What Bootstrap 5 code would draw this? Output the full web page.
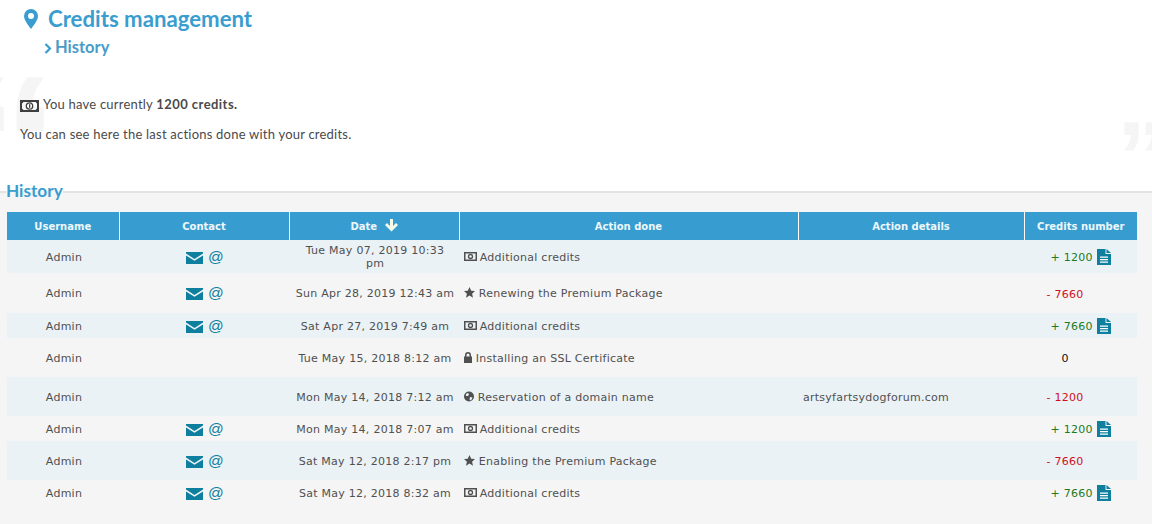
<!DOCTYPE html>
<html lang="en">
<head>
<meta charset="utf-8">
<title>Credits management</title>
<link href="https://cdn.jsdelivr.net/npm/bootstrap@5.3.0/dist/css/bootstrap.min.css" rel="stylesheet">
<style>
html,body{height:100%}
body{background:#fff;font-family:"DejaVu Sans",sans-serif;font-size:11px;color:#505050;overflow:hidden;display:flex;flex-direction:column}
.title-row{padding:3px 0 0 24px;height:35px;gap:10px}
.title-txt{font-size:22.2px;line-height:28px;margin:0;font-family:Lato,sans-serif;font-weight:700;color:#3a9dcf}
.sub-row{padding-left:44px;height:26px;gap:3px}
.sub-txt{font-size:16.5px;line-height:24px;margin:0 0 2px;font-family:Lato,sans-serif;font-weight:700;color:#4a9cc8}
.intro{position:relative;height:120px;padding:34px 0 0 20px;font-family:Lato,sans-serif;font-size:13px;letter-spacing:.22px;color:#4a4a4a}
.intro p{margin:0 0 12px;line-height:18px}
.intro b{letter-spacing:.45px}
.q-mark{position:absolute;font-family:"Liberation Sans",sans-serif;font-weight:700;color:#f5f5f5;line-height:1;letter-spacing:0;z-index:-1}
.q-open{font-size:190px;left:-37px;top:-14px}
.q-close{font-size:100px;right:-15px;top:45px}
.hist{flex:1 1 auto;margin:0;border:0;border-top:2px solid #e3e3e3;background:#f5f5f5;padding:0 15px 0 7px;min-width:0}
.hist legend{float:none;width:auto;margin:0 0 0 -1px;padding:0 0 2px;font-family:Lato,sans-serif;font-weight:700;font-size:17.2px;line-height:20px;color:#3a9dcf}
.log{table-layout:fixed;width:1130px;margin:9px 0 0;--bs-table-bg:transparent;--bs-table-striped-bg:#eaf2f6;--bs-table-striped-color:#505050;--bs-table-color:#505050;color:#505050}
.log th{background:#379dd0;color:#eef7fb;font-size:10px;font-weight:700;height:28px;padding:1px 4px 0;border:0;border-right:1px solid #fff;vertical-align:middle;text-align:center;box-shadow:none}
.log th:last-child{border-right:0}
.log td{border:0;padding:1px 3px 0 5px;vertical-align:middle;line-height:13px;letter-spacing:.26px}
.log tbody tr:nth-child(1) td{height:33px}
.log tbody tr:nth-child(2) td{height:40px}
.log tbody tr:nth-child(3) td{height:25px}
.log tbody tr:nth-child(4) td{height:39px}
.log tbody tr:nth-child(5) td{height:39px}
.log tbody tr:nth-child(6) td{height:25px}
.log tbody tr:nth-child(7) td{height:39px}
.log tbody tr:nth-child(8) td{height:25px}
.at{font-family:"Liberation Sans",sans-serif;font-size:15.5px;line-height:14px;color:#0f7f9f;letter-spacing:0;display:inline-block}
.ic-mail{width:17px;height:12px;vertical-align:-2px;margin-right:1px}
.ic-file{width:14px;height:16px;vertical-align:-4px;margin-right:2px}
.ic-spacer{margin-left:15px;margin-right:0}
.ic-act{height:11px;vertical-align:-1px}
.ic-money{margin-right:-1px}
.pos{color:#1d7a1d}
.neg{color:#d0111b}
.zero{color:#111}
</style>
</head>
<body>
<div class="d-flex align-items-center title-row">
  <svg width="14" height="20" viewBox="0 0 14 20" aria-hidden="true"><path fill="#3a9dcf" fill-rule="evenodd" d="M7 0a7 7 0 0 1 7 7c0 4-4 9-7 13C4 16 0 11 0 7a7 7 0 0 1 7-7zm0 4a3 3 0 1 0 0 6 3 3 0 0 0 0-6z"/></svg>
  <h1 class="title-txt">Credits management</h1>
</div>
<div class="d-flex align-items-center sub-row">
  <svg width="8" height="11" viewBox="0 0 8 11" aria-hidden="true"><path fill="none" stroke="#3a9dcf" stroke-width="2.2" d="M1.500 1l4.500 4.500L1.500 10"/></svg>
  <h2 class="sub-txt">History</h2>
</div>
<div class="intro">
  <span class="q-mark q-open">“</span>
  <span class="q-mark q-close">”</span>
  <p><svg width="19" height="12" viewBox="0 0 19 12" class="me-1 align-text-bottom" aria-hidden="true"><path fill="#3f3f3f" fill-rule="evenodd" d="M0 0h19v12H0zM3.500 2L2 3.500v5L3.500 10h12L17 8.500v-5L15.500 2z"/><circle cx="9.500" cy="6" r="3.200" fill="#fff" stroke="#3f3f3f" stroke-width="1.300"/><rect x="9" y="4.200" width="1.300" height="3.600" fill="#3f3f3f"/></svg>You have currently <b class="fw-bold">1200 credits.</b></p>
  <p>You can see here the last actions done with your credits.</p>
</div>
<fieldset class="hist">
  <legend>History</legend>
  <table class="table table-striped log">
    <colgroup><col style="width:112px"><col style="width:170px"><col style="width:170px"><col style="width:339px"><col style="width:226px"><col style="width:113px"></colgroup>
    <thead>
      <tr>
        <th>Username</th><th>Contact</th>
        <th>Date <svg width="13" height="13" viewBox="0 0 13 13" class="align-text-bottom ms-1" aria-hidden="true"><path fill="#f4f9e8" d="M5 0h3v7l3-3 2 2-6.500 6.500L0 6l2-2 3 3z"/></svg></th>
        <th>Action done</th><th>Action details</th><th>Credits number</th>
      </tr>
    </thead>
    <tbody>
      <tr>
        <td class="text-center">Admin</td>
        <td class="text-center"><svg class="ic-mail" viewBox="0 0 17 12" aria-hidden="true"><use href="#m"/></svg> <span class="at">@</span></td>
        <td class="text-center">Tue May 07, 2019 10:33<br>pm</td>
        <td><svg class="ic-act ic-money" width="13" viewBox="0 0 13 11" aria-hidden="true"><use href="#c"/></svg> Additional credits</td>
        <td></td>
        <td class="text-center"><span class="pos">+ 1200</span> <svg class="ic-file" viewBox="0 0 14 16" aria-hidden="true"><use href="#f"/></svg></td>
      </tr>
      <tr>
        <td class="text-center">Admin</td>
        <td class="text-center"><svg class="ic-mail" viewBox="0 0 17 12" aria-hidden="true"><use href="#m"/></svg> <span class="at">@</span></td>
        <td class="text-center">Sun Apr 28, 2019 12:43 am</td>
        <td><svg class="ic-act" width="11" viewBox="0 0 11 11" aria-hidden="true"><use href="#s"/></svg> Renewing the Premium Package</td>
        <td></td>
        <td class="text-center"><span class="neg">- 7660</span> <svg class="ic-file ic-spacer invisible" viewBox="0 0 14 16" aria-hidden="true"><use href="#f"/></svg></td>
      </tr>
      <tr>
        <td class="text-center">Admin</td>
        <td class="text-center"><svg class="ic-mail" viewBox="0 0 17 12" aria-hidden="true"><use href="#m"/></svg> <span class="at">@</span></td>
        <td class="text-center">Sat Apr 27, 2019 7:49 am</td>
        <td><svg class="ic-act ic-money" width="13" viewBox="0 0 13 11" aria-hidden="true"><use href="#c"/></svg> Additional credits</td>
        <td></td>
        <td class="text-center"><span class="pos">+ 7660</span> <svg class="ic-file" viewBox="0 0 14 16" aria-hidden="true"><use href="#f"/></svg></td>
      </tr>
      <tr>
        <td class="text-center">Admin</td>
        <td></td>
        <td class="text-center">Tue May 15, 2018 8:12 am</td>
        <td><svg class="ic-act" width="8" viewBox="0 0 8 11" aria-hidden="true"><use href="#l"/></svg> Installing an SSL Certificate</td>
        <td></td>
        <td class="text-center"><span class="zero">0</span> <svg class="ic-file ic-spacer invisible" viewBox="0 0 14 16" aria-hidden="true"><use href="#f"/></svg></td>
      </tr>
      <tr>
        <td class="text-center">Admin</td>
        <td></td>
        <td class="text-center">Mon May 14, 2018 7:12 am</td>
        <td><svg class="ic-act" width="10" viewBox="0 0 10 11" aria-hidden="true"><use href="#g"/></svg> Reservation of a domain name</td>
        <td>artsyfartsydogforum.com</td>
        <td class="text-center"><span class="neg">- 1200</span> <svg class="ic-file ic-spacer invisible" viewBox="0 0 14 16" aria-hidden="true"><use href="#f"/></svg></td>
      </tr>
      <tr>
        <td class="text-center">Admin</td>
        <td class="text-center"><svg class="ic-mail" viewBox="0 0 17 12" aria-hidden="true"><use href="#m"/></svg> <span class="at">@</span></td>
        <td class="text-center">Mon May 14, 2018 7:07 am</td>
        <td><svg class="ic-act ic-money" width="13" viewBox="0 0 13 11" aria-hidden="true"><use href="#c"/></svg> Additional credits</td>
        <td></td>
        <td class="text-center"><span class="pos">+ 1200</span> <svg class="ic-file" viewBox="0 0 14 16" aria-hidden="true"><use href="#f"/></svg></td>
      </tr>
      <tr>
        <td class="text-center">Admin</td>
        <td class="text-center"><svg class="ic-mail" viewBox="0 0 17 12" aria-hidden="true"><use href="#m"/></svg> <span class="at">@</span></td>
        <td class="text-center">Sat May 12, 2018 2:17 pm</td>
        <td><svg class="ic-act" width="11" viewBox="0 0 11 11" aria-hidden="true"><use href="#s"/></svg> Enabling the Premium Package</td>
        <td></td>
        <td class="text-center"><span class="neg">- 7660</span> <svg class="ic-file ic-spacer invisible" viewBox="0 0 14 16" aria-hidden="true"><use href="#f"/></svg></td>
      </tr>
      <tr>
        <td class="text-center">Admin</td>
        <td class="text-center"><svg class="ic-mail" viewBox="0 0 17 12" aria-hidden="true"><use href="#m"/></svg> <span class="at">@</span></td>
        <td class="text-center">Sat May 12, 2018 8:32 am</td>
        <td><svg class="ic-act ic-money" width="13" viewBox="0 0 13 11" aria-hidden="true"><use href="#c"/></svg> Additional credits</td>
        <td></td>
        <td class="text-center"><span class="pos">+ 7660</span> <svg class="ic-file" viewBox="0 0 14 16" aria-hidden="true"><use href="#f"/></svg></td>
      </tr>
    </tbody>
  </table>
</fieldset>
<svg width="0" height="0" class="d-none" aria-hidden="true">
  <symbol id="m" viewBox="0 0 17 12"><path fill="#0f7f9f" d="M0 0h17v1.500L8.500 7 0 1.500zM0 3.500l8.500 5.300L17 3.500V12H0z"/></symbol>
  <symbol id="f" viewBox="0 0 14 16"><path fill="#0f7f9f" d="M0 0h8.500v5H14v11H0z"/><path fill="#0f7f9f" d="M9.500 0L14 4H9.500z"/><path fill="#fff" d="M3 7.500h8v1.300H3zM3 10h8v1.300H3zM3 12.500h8v1.300H3z"/></symbol>
  <symbol id="c" viewBox="0 0 13 11"><path fill="#505050" fill-rule="evenodd" d="M0 1h13v9H0zM1.500 2.500v6h10v-6z"/><circle cx="6.500" cy="5.500" r="2" fill="none" stroke="#505050" stroke-width="1.300"/></symbol>
  <symbol id="s" viewBox="0 0 11 11"><path fill="#505050" d="M5.500 0l1.700 3.700 3.800.4-2.900 2.600.9 4-3.500-2.100L2 10.700l.9-4L0 4.100l3.800-.4z"/></symbol>
  <symbol id="l" viewBox="0 0 8 11"><path fill="#505050" fill-rule="evenodd" d="M1 4.500V3a3 3 0 0 1 6 0v1.500h1V11H0V4.500zM2.500 4.500h3V3a1.500 1.500 0 0 0-3 0z"/></symbol>
  <symbol id="g" viewBox="0 0 10 11"><circle cx="5" cy="5.500" r="5" fill="#505050"/><path fill="#eaf2f6" d="M2 3l2-1 1 1-1 2-2 0zM6 6l2.500.5L7 9.500 5.500 8.500z"/></symbol>
</svg>
<script src="https://cdn.jsdelivr.net/npm/bootstrap@5.3.0/dist/js/bootstrap.bundle.min.js"></script>
</body>
</html>
